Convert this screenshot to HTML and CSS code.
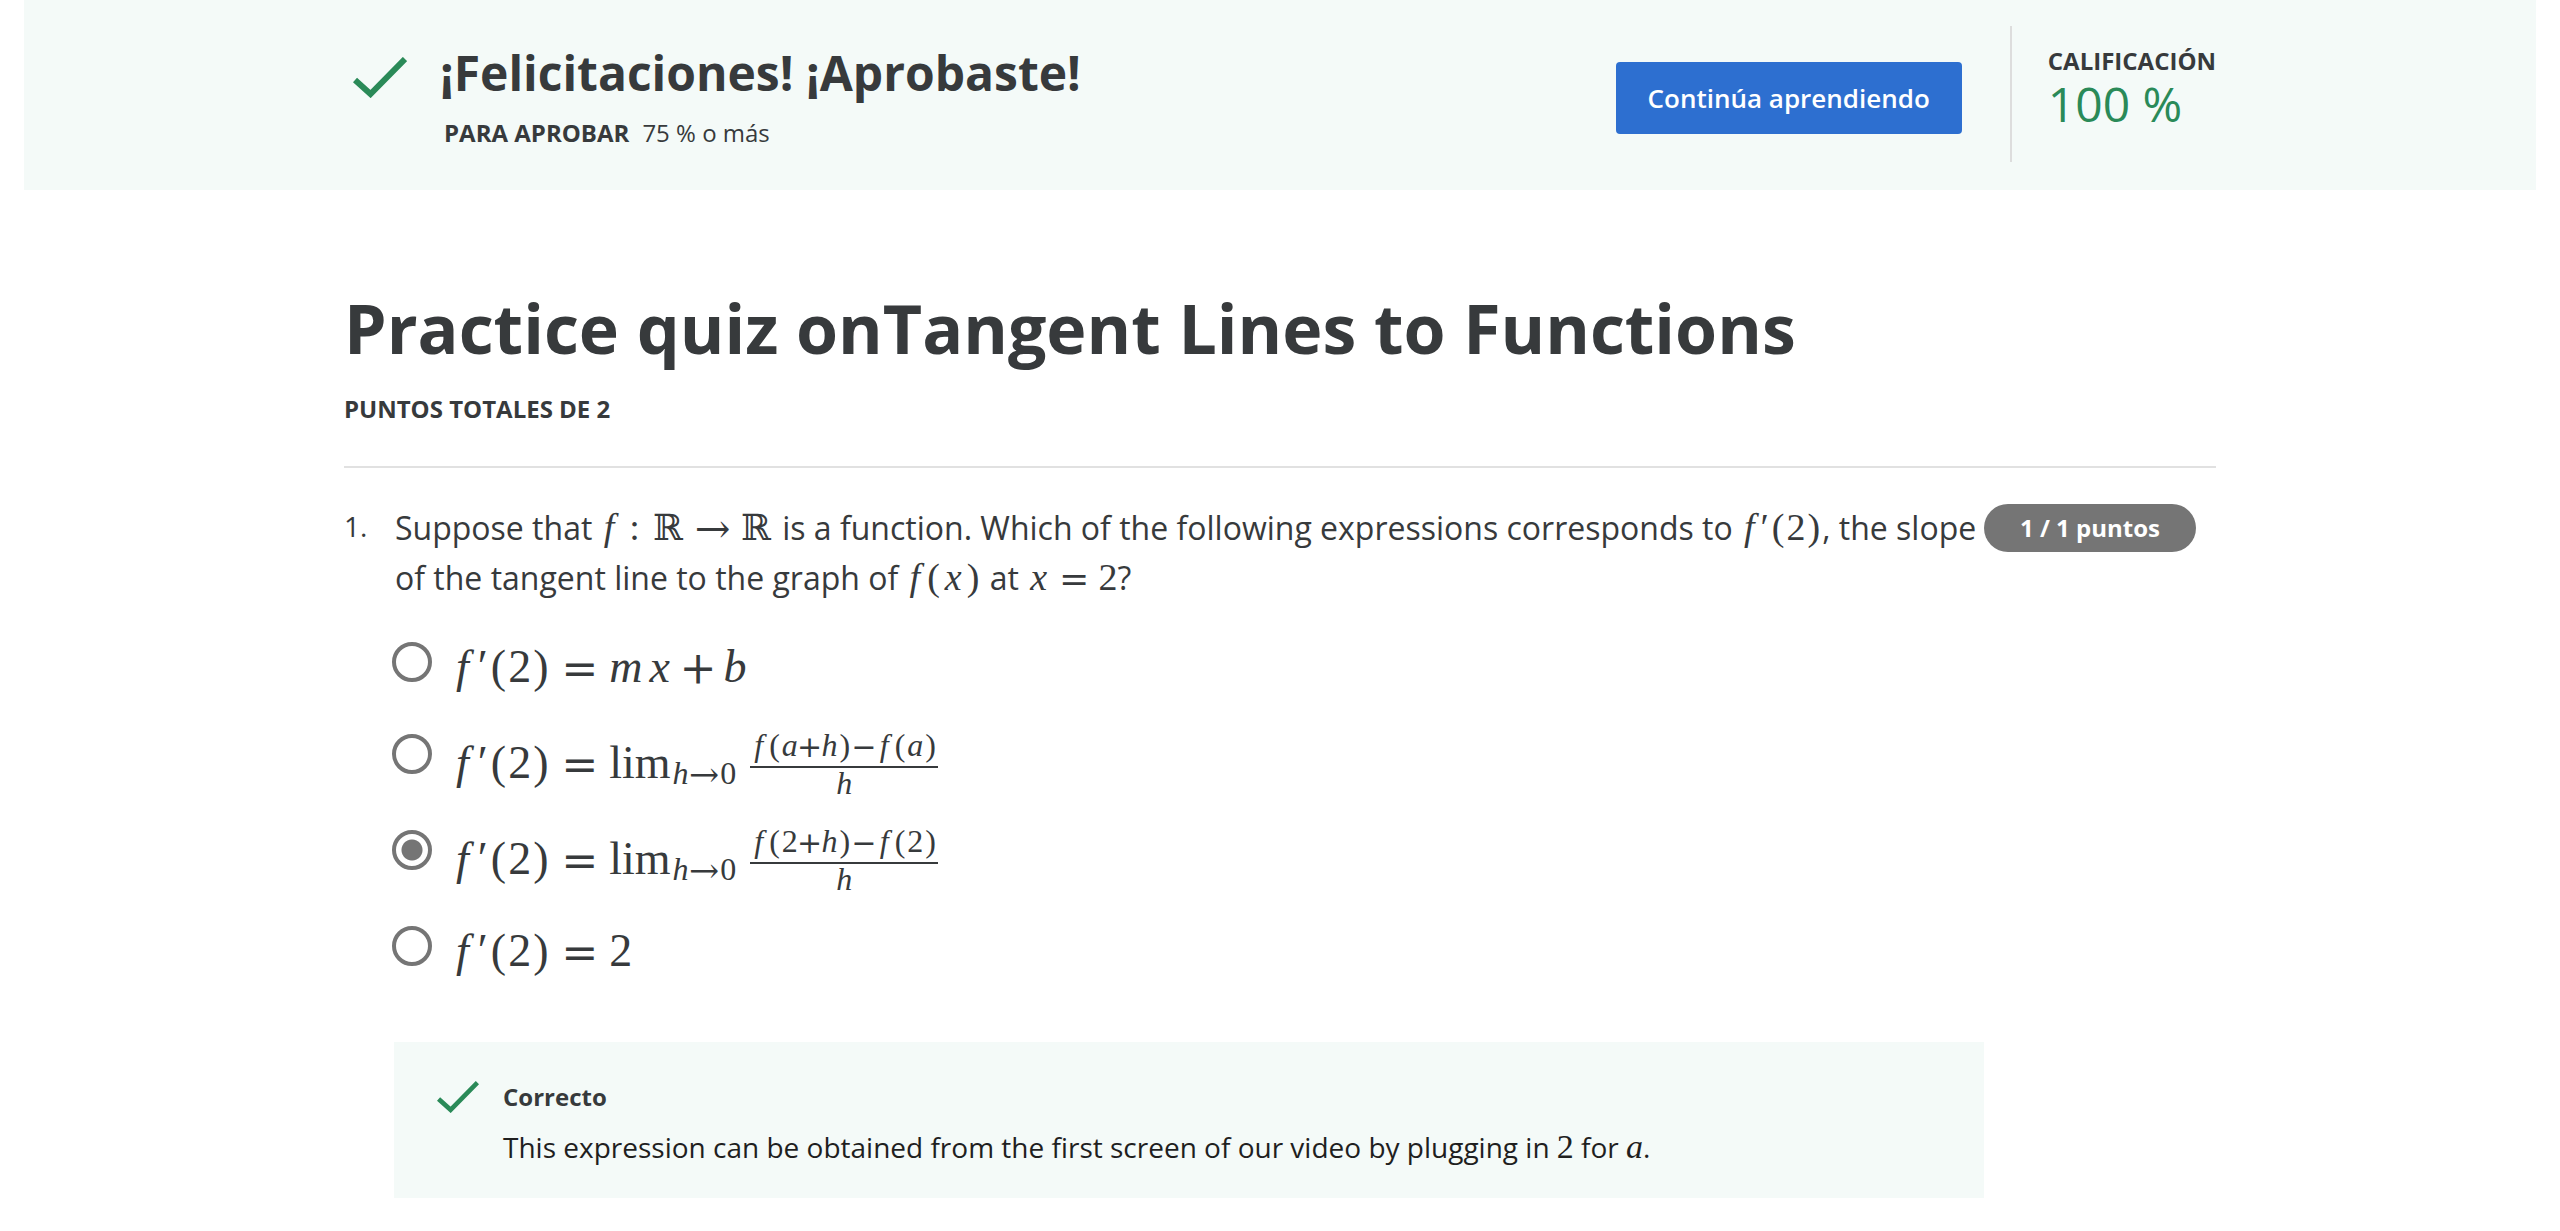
FILE: index.html
```html
<!DOCTYPE html>
<html lang="es">
<head>
<meta charset="utf-8">
<meta name="viewport" content="width=device-width, initial-scale=1">
<title>Practice quiz onTangent Lines to Functions</title>
<link rel="stylesheet" href="styles.css">
</head>
<body>
<header class="banner">
  <div class="banner-inner">
    <svg class="banner-check" viewBox="0 0 54 41" aria-hidden="true"><path d="M2 23 17.500 37 52 2" fill="none" stroke="currentColor" stroke-width="6"/></svg>
    <div class="banner-text">
      <h2 class="banner-title">¡Felicitaciones! ¡Aprobaste!</h2>
      <p class="banner-rule"><strong>PARA APROBAR</strong><span>75 % o más</span></p>
    </div>
    <button class="continue" type="button">Continúa aprendiendo</button>
    <div class="grade">
      <div class="grade-label">CALIFICACIÓN</div>
      <div class="grade-value">100 %</div>
    </div>
  </div>
</header>
<main class="quiz">
  <div class="quiz-head">
    <h1 class="quiz-title">Practice quiz onTangent Lines to Functions</h1>
    <p class="quiz-points">PUNTOS TOTALES DE 2</p>
  </div>
  <section class="question">
    <div class="number">1.</div>
    <div class="body">
      <p class="prompt" id="prompt">Suppose that <span class="math"><i class="f">f</i><span class="colon">:</span><span class="set">ℝ</span><span class="arrow">→</span><span class="set">ℝ</span></span> is a function. Which of the following expressions corresponds to <span class="math"><i class="f">f</i><span class="prime">′</span><span class="paren">(</span>2<span class="paren">)</span></span>, the slope of the tangent line to the graph of <span class="math"><i class="f">f</i><span class="paren">(</span><i class="x">x</i><span class="paren">)</span></span> at <span class="math"><i class="x">x</i><span class="op">=</span>2</span>?</p>
      <div class="options" role="radiogroup" aria-labelledby="prompt">
        <label class="option"><input class="radio" type="radio" name="q1"><span class="math big"><i class="f">f</i><span class="prime">′</span><span class="paren">(</span>2<span class="paren">)</span><span class="op">=</span><i class="m">m</i><i class="x">x</i><span class="op plus">+</span><i>b</i></span></label>
        <label class="option tall"><input class="radio" type="radio" name="q1"><span class="math big"><i class="f">f</i><span class="prime">′</span><span class="paren">(</span>2<span class="paren">)</span><span class="op">=</span>lim<span class="sub"><i>h</i><span class="to">→</span>0</span><span class="frac"><span class="num"><i class="f">f</i><span class="paren">(</span><i>a</i><span class="bin">+</span><i>h</i><span class="paren">)</span><span class="bin">−</span><i class="f">f</i><span class="paren">(</span><i>a</i><span class="paren">)</span></span><span class="den"><i>h</i></span></span></span></label>
        <label class="option tall"><input class="radio" type="radio" name="q1" checked><span class="math big"><i class="f">f</i><span class="prime">′</span><span class="paren">(</span>2<span class="paren">)</span><span class="op">=</span>lim<span class="sub"><i>h</i><span class="to">→</span>0</span><span class="frac"><span class="num"><i class="f">f</i><span class="paren">(</span>2<span class="bin">+</span><i>h</i><span class="paren">)</span><span class="bin">−</span><i class="f">f</i><span class="paren">(</span>2<span class="paren">)</span></span><span class="den"><i>h</i></span></span></span></label>
        <label class="option"><input class="radio" type="radio" name="q1"><span class="math big"><i class="f">f</i><span class="prime">′</span><span class="paren">(</span>2<span class="paren">)</span><span class="op">=</span>2</span></label>
      </div>
      <div class="feedback">
        <svg class="feedback-check" viewBox="0 0 54 41" aria-hidden="true"><path d="M2 23 17.500 37 52 2" fill="none" stroke="currentColor" stroke-width="6"/></svg>
        <div>
          <p class="feedback-title">Correcto</p>
          <p class="feedback-text">This expression can be obtained from the first screen of our video by plugging in <span class="math small">2</span> for <span class="math small"><i>a</i></span>.</p>
        </div>
      </div>
    </div>
    <div class="badge">1 / 1 puntos</div>
  </section>
</main>
</body>
</html>
```
FILE: styles.css
```css
* { box-sizing: border-box; }
body {
  margin: 0;
  background: #fff;
  color: #373a3c;
  font-family: "Open Sans", "Noto Sans", sans-serif;
}
h1, h2, p { margin: 0; }

/* Result banner */
.banner {
  margin: 0 24px;
  padding: 26px 24px 28px;
  background: #f4faf8;
}
.banner-inner {
  display: flex;
  align-items: center;
  max-width: 1872px;
  margin: 0 auto;
}
.banner-check {
  flex: none;
  align-self: flex-start;
  width: 54px;
  height: 41px;
  margin: 31px 33px 0 9px;
  color: #2a8a58;
}
.banner-text { flex: 1; }
.banner-title {
  padding-top: 2px;
  font-size: 48px;
  line-height: 64px;
  font-weight: 700;
}
.banner-rule {
  display: flex;
  gap: 13px;
  margin: 12px 0 0 4px;
  font-size: 24px;
  line-height: 32px;
}
.continue {
  min-width: 346px;
  height: 72px;
  margin: 8px 48px 0 24px;
  padding: 0 32px;
  border: 0;
  border-radius: 4px;
  background: #2d6fd0;
  color: #fff;
  font: 600 26px/36px "Open Sans", "Noto Sans", sans-serif;
  cursor: pointer;
}
.grade {
  min-height: 136px;
  padding: 19px 0 0 36px;
  border-left: 2px solid #ddd;
}
.grade-label {
  font-size: 24px;
  line-height: 32px;
  font-weight: 700;
}
.grade-value {
  font-size: 48px;
  line-height: 54px;
  color: #2a8a58;
}

/* Quiz */
.quiz {
  max-width: 1920px;
  margin: 0 auto;
  padding: 92px 24px 33px;
}
.quiz-head {
  padding-bottom: 41px;
  border-bottom: 2px solid #e1e1e1;
}
.quiz-title {
  font-size: 68px;
  line-height: 92px;
  font-weight: 700;
}
.quiz-points {
  margin-top: 19px;
  font-size: 24px;
  line-height: 32px;
  font-weight: 700;
}
.question {
  display: flex;
  align-items: flex-start;
  padding: 35px 20px 0 0;
}
.number {
  flex: none;
  width: 50px;
  font-size: 28px;
  line-height: 46px;
}
.body { flex: 1; }
.prompt {
  padding-left: 1px;
  font-size: 32px;
  line-height: 50px;
}
.badge {
  flex: none;
  width: 212px;
  margin-top: 1px;
  border-radius: 24px;
  background: #757575;
  color: #fff;
  font-size: 24px;
  line-height: 48px;
  font-weight: 700;
  text-align: center;
}

/* Formulas */
.math {
  font-family: "Liberation Serif", "DejaVu Serif", serif;
  font-size: 38px;
  line-height: 38px;
  white-space: nowrap;
}
.f { margin: 0 5px 0 3px; }
.prime { margin: 0 1px; }
.paren { margin: 0 2px; }
.x { margin: 0 3px; }
.colon { margin: 0 12px 0 10px; }
.set, .arrow, .to, .op, .bin {
  font-family: "DejaVu Math TeX Gyre", "Liberation Serif", serif;
}
.set { font-size: 36px; }
.arrow { margin: 0 8px; }
.op {
  margin: 0 10px;
  font-size: 36px;
}
.big {
  font-size: 46px;
  line-height: 60px;
}
.big .f { margin: 0 8px 0 0; }
.big .op {
  margin: 0 12px;
  font-size: 44px;
  line-height: 46px;
}
.big .plus { margin: 0 8px; }
.big .m { margin: 0 4px 0 0; }
.sub {
  margin-left: 2px;
  font-size: 32px;
  line-height: 32px;
  vertical-align: -6px;
}
.frac {
  display: inline-flex;
  flex-direction: column;
  align-items: stretch;
  margin-left: 14px;
  font-size: 32px;
  text-align: center;
  vertical-align: 22px;
}
.num {
  padding-bottom: 5px;
  border-bottom: 2px solid currentColor;
  line-height: 32px;
}
.num .f { margin: 0 4px; }
.bin {
  font-size: 30px;
  line-height: 20px;
}
.den { line-height: 30px; }
.small { font-size: 34px; }

/* Answers */
.options {
  display: flex;
  flex-direction: column;
  gap: 24px;
  margin-top: 34px;
}
.option {
  display: flex;
  align-items: flex-start;
  min-height: 68px;
}
.tall { min-height: 72px; }
.radio {
  appearance: none;
  flex: none;
  width: 40px;
  height: 40px;
  margin: 5px 24px 0 -2px;
  border: 4px solid #757575;
  border-radius: 50%;
}
.radio:checked { background: radial-gradient(circle, #757575 10px, transparent 11px); }

/* Feedback */
.feedback {
  display: flex;
  gap: 24px;
  margin-top: 53px;
  padding: 39px 24px 26px 43px;
  background: #f4faf8;
}
.feedback-check {
  flex: none;
  width: 42px;
  height: 32px;
  color: #2a8a58;
}
.feedback-title {
  font-size: 24px;
  line-height: 32px;
  font-weight: 700;
}
.feedback-text {
  margin-top: 9px;
  color: #1f1f1f;
  font-size: 28px;
  line-height: 50px;
}
```
